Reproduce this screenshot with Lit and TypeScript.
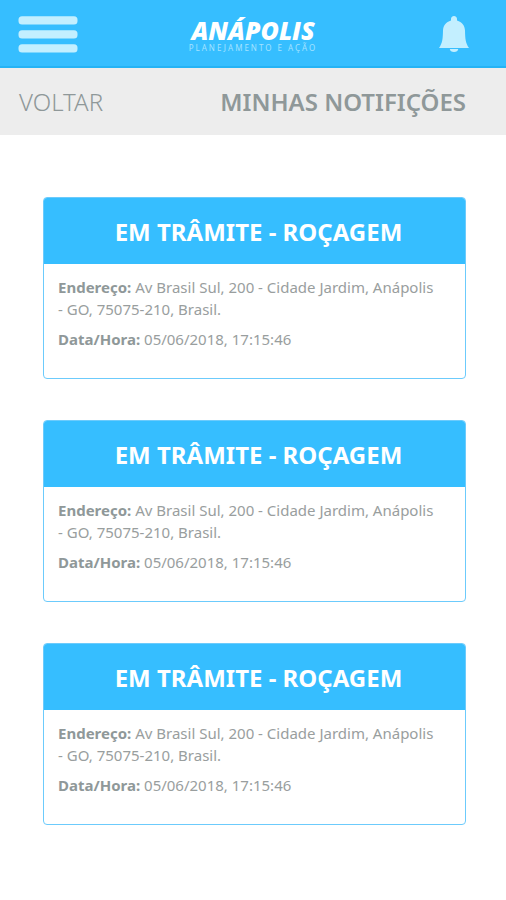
import { LitElement, html, css } from "lit";
import { customElement, property } from "lit/decorators.js";

interface Notice {
  title: string;
  address: string;
  date: string;
}

const notices: Notice[] = Array.from({ length: 3 }, () => ({
  title: "EM TRÂMITE - ROÇAGEM",
  address: "Av Brasil Sul, 200 - Cidade Jardim, Anápolis - GO, 75075-210, Brasil.",
  date: "05/06/2018, 17:15:46",
}));

@customElement("notice-card")
export class NoticeCard extends LitElement {
  @property({ attribute: false }) notice!: Notice;

  static styles = css`
    :host {
      display: block;
    }
    .card {
      border: 1px solid #6ccbfc;
      border-radius: 4px;
      overflow: hidden;
      background: #fff;
    }
    .title {
      margin: 0;
      padding: 18px 0 16px 8px;
      background: #36beff;
      color: #fff;
      font-size: 24px;
      line-height: 32px;
      font-weight: 700;
      text-align: center;
      white-space: nowrap;
    }
    .body {
      padding: 12px 28px 20px 14px;
      color: #999e9e;
      font-size: 15px;
      line-height: 22px;
    }
    .line {
      margin: 0 0 8px;
    }
    .label {
      color: #8f9899;
      font-weight: 700;
    }
  `;

  render() {
    return html`
      <article class="card">
        <h2 class="title">${this.notice.title}</h2>
        <div class="body">
          <p class="line"><b class="label">Endereço:</b> ${this.notice.address}</p>
          <p class="line"><b class="label">Data/Hora:</b> ${this.notice.date}</p>
        </div>
      </article>
    `;
  }
}

@customElement("app-root")
export class AppRoot extends LitElement {
  static styles = css`
    :host {
      display: block;
      min-height: 100vh;
      background: #fff;
      font-family: "Noto Sans", "Open Sans", sans-serif;
    }
    .topbar {
      display: grid;
      grid-template-columns: 1fr auto 1fr;
      align-items: center;
      box-sizing: border-box;
      height: 68px;
      padding-top: 4px;
      background: #36beff;
      border-bottom: 2px solid #24b3f5;
    }
    .icon-button {
      display: block;
      padding: 0;
      border: 0;
      background: none;
      cursor: pointer;
    }
    .icon-button svg {
      display: block;
    }
    .menu {
      justify-self: start;
      margin-left: 18px;
    }
    .bell {
      justify-self: end;
      margin-right: 36px;
    }
    .logo {
      display: flex;
      flex-direction: column;
      align-items: center;
      color: #fff;
      white-space: nowrap;
    }
    .name {
      font-family: "Open Sans", sans-serif;
      font-size: 25px;
      line-height: 26px;
      font-weight: 800;
      font-style: italic;
    }
    .tagline {
      color: #a4e2ff;
      font-size: 8px;
      line-height: 10px;
      letter-spacing: 2px;
    }
    .subbar {
      display: flex;
      align-items: center;
      justify-content: space-between;
      padding: 18px 40px 17px 19px;
      background: #ededed;
      color: #8f9899;
      font-size: 24px;
      line-height: 32px;
    }
    .back {
      color: #8f9899;
      font-weight: 300;
      text-decoration: none;
    }
    .heading {
      margin: 0;
      font-size: 24px;
      font-weight: 600;
    }
    .list {
      display: flex;
      flex-direction: column;
      gap: 41px;
      padding: 62px 40px 62px 43px;
    }
  `;

  render() {
    return html`
      <header class="topbar">
        <button class="icon-button menu" aria-label="Menu">
          <svg width="60" height="38" viewBox="0 0 60 38" fill="#c3efff">
            <rect x="0.500" y="0.300" width="59" height="8.200" rx="3.500" />
            <rect x="0.500" y="14.300" width="59" height="8.200" rx="3.500" />
            <rect x="0.500" y="28.300" width="59" height="8.200" rx="3.500" />
          </svg>
        </button>
        <div class="logo">
          <span class="name">ANÁPOLIS</span>
          <span class="tagline">PLANEJAMENTO E AÇÃO</span>
        </div>
        <button class="icon-button bell" aria-label="Notificações">
          <svg width="32" height="38" viewBox="0 0 32 38" fill="#c3efff">
            <path d="M16 0C14.200 0 13 1.400 13 3V4.500C8 6 5.200 9.500 5 14.500C4.800 23 4.500 27 1 32H31C27.500 27 27.200 23 27 14.500C26.800 9.500 24 6 19 4.500V3C19 1.400 17.800 0 16 0Z" />
            <path d="M11.800 33H20.200C20 34.800 18.500 36 16 36C13.500 36 12 34.800 11.800 33Z" />
          </svg>
        </button>
      </header>
      <nav class="subbar">
        <a class="back" href="#">VOLTAR</a>
        <h1 class="heading">MINHAS NOTIFIÇÕES</h1>
      </nav>
      <main class="list">
        ${notices.map((n) => html`<notice-card .notice=${n}></notice-card>`)}
      </main>
    `;
  }
}
